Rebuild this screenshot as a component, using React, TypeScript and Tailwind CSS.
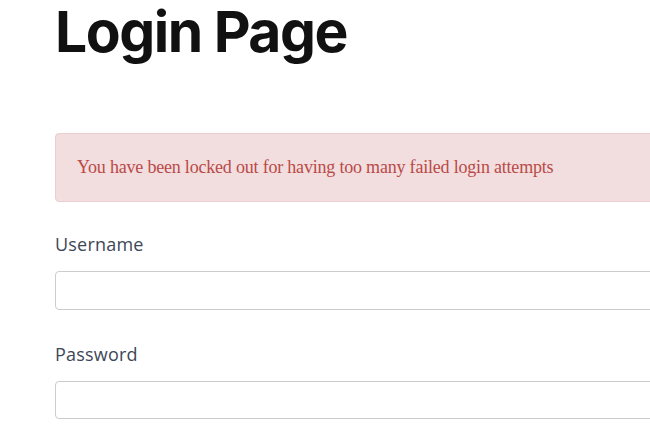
export default function App() {
  return (
    <div className="w-[650px] h-[430px] overflow-hidden bg-white">
      <div className="w-[760px] pl-[55px]">
        {/* Page heading */}
        <h1 className="text-[57px] leading-[64px] font-bold tracking-[-1.5px] text-[#111111] [font-family:Inter,sans-serif]">
          Login Page
        </h1>

        {/* Lockout alert */}
        <div className="mt-[69px] h-[69px] flex items-center pl-[21px] bg-[#f2dede] border border-[#ebccd1] rounded-[4px]">
          <span className="text-[18px] text-[#b94a48] tracking-[-0.2px] [font-family:'Liberation_Serif',serif]">
            You have been locked out for having too many failed login attempts
          </span>
        </div>

        {/* Login form */}
        <form className="flex flex-col">
          <label className="mt-[30px] text-[18px] leading-[24px] tracking-[0.2px] text-[#3d4757] [font-family:'Open_Sans',sans-serif]">
            Username
          </label>
          <input
            type="text"
            className="mt-[15px] h-[39px] border border-[#cccccc] rounded-[4px] bg-white"
          />
          <label className="mt-[32px] text-[18px] leading-[24px] tracking-[0.2px] text-[#3d4757] [font-family:'Open_Sans',sans-serif]">
            Password
          </label>
          <input
            type="password"
            className="mt-[15px] h-[38px] border border-[#cccccc] rounded-[4px] bg-white"
          />
        </form>
      </div>
    </div>
  );
}
